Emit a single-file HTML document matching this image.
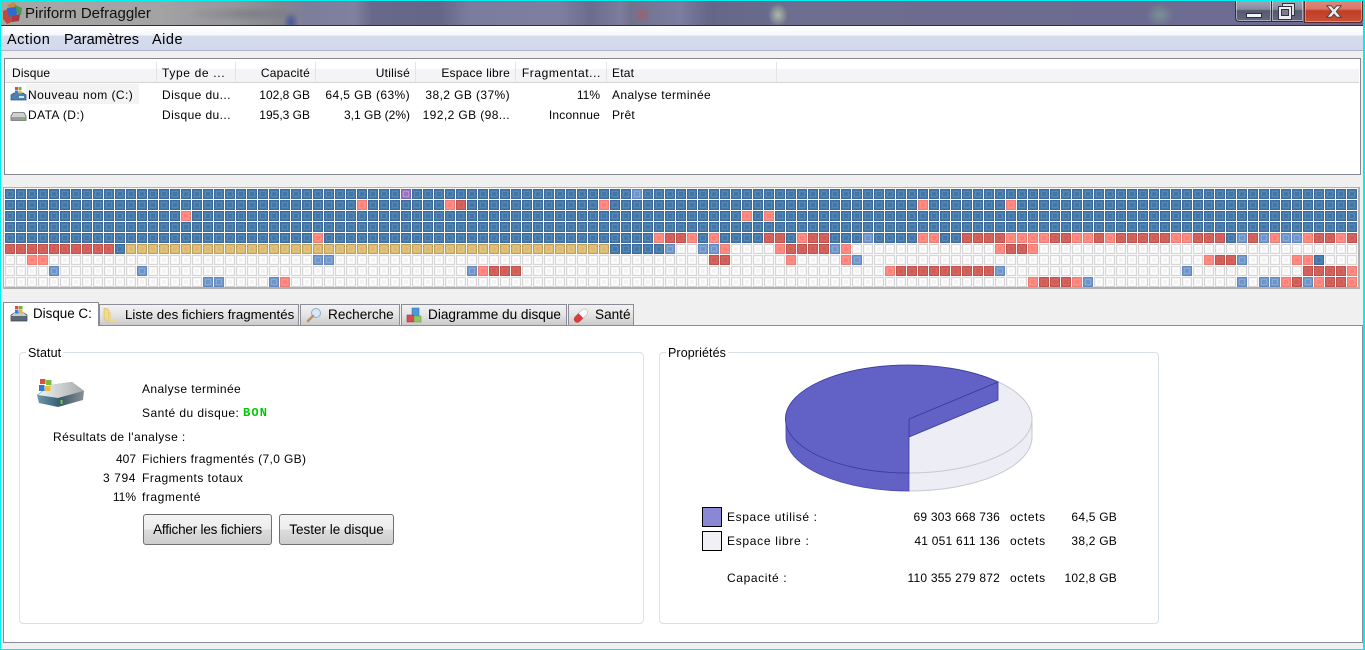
<!DOCTYPE html>
<html><head><meta charset="utf-8"><title>Piriform Defraggler</title>
<style>
html,body{margin:0;padding:0;width:1365px;height:650px;overflow:hidden;background:#f0f0f0}
body{position:relative;font-family:"Liberation Sans",sans-serif;font-size:12px;color:#000}
div,span,svg{position:absolute}
.t{white-space:nowrap;line-height:16px;height:16px;letter-spacing:.4px}
.n{letter-spacing:0}
.n2{letter-spacing:.22px}
.w{letter-spacing:.62px}
.r{text-align:right}
.tab{box-sizing:border-box;border:1px solid #8c8c96;border-bottom:0;top:304px;height:21px;background:linear-gradient(#f2f2f2,#e4e4e4 50%,#cacaca)}
.tx{font-size:13.4px;white-space:nowrap;line-height:16px;height:16px;top:307px}
.sep{width:1px;top:62px;height:20px;background:#e4e4e8}
.fs{box-sizing:border-box;border:1px solid #d8e0e8;border-radius:4px;top:352px;height:272px;background:#fff}
.lg{background:#fff;padding:0 2px;top:345px;white-space:nowrap;line-height:16px;height:16px;font-size:12.5px;letter-spacing:.1px}
.btn{box-sizing:border-box;border:1px solid #707070;border-radius:3px;top:514px;height:31px;background:linear-gradient(#f4f4f4,#ececec 50%,#dcdcdc 50%,#cecece);text-align:center;line-height:29px;font-size:13.5px;white-space:nowrap}
.menu{font-size:14.5px;top:32px;line-height:16px;height:16px;white-space:nowrap}
</style></head><body>

<!-- title bar -->
<div style="left:0;top:0;width:1365px;height:25px;background:
radial-gradient(ellipse 8px 10px at 291px 22px,rgba(50,70,150,.75),rgba(50,70,150,0)),
radial-gradient(ellipse 9px 9px at 642px 15px,rgba(170,90,90,.65),rgba(170,90,90,0)),
radial-gradient(ellipse 10px 12px at 778px 15px,rgba(190,205,170,.8),rgba(190,205,170,0)),
radial-gradient(ellipse 14px 12px at 1160px 15px,rgba(130,170,150,.6),rgba(130,170,150,0)),
radial-gradient(ellipse 60px 8px at 245px 14px,rgba(90,90,100,.3),rgba(90,90,100,0)),
linear-gradient(90deg,#a7a7a4 0,#a3a3a4 160px,#97979c 230px,#85858e 280px,#7d7d9c 310px,#80809f 355px,#68688a 372px,#666688 440px,#7c7c9e 470px,#7e7ea0 560px,#6c6c8e 590px,#7c7c9c 620px,#72728e 632px,#7c7ca0 680px,#666688 710px,#686a8c 760px,#6e6e90 792px,#6c6a90 1130px,#6e6c92 1178px,#6c6a90 1365px)"></div>
<div style="left:0;top:25px;width:1365px;height:1px;background:#2e2e3c"></div>

<!-- app icon -->
<svg style="left:2px;top:2px" width="21" height="22" viewBox="0 0 21 22">
<path d="M1 9 L8 6 L12 19 L5 22 L1 17Z" fill="#c0483c"/>
<path d="M5 3 L12 0 L16 5 L9 8Z" fill="#c88a3c"/>
<path d="M13 3 L20 6 L19 13 L13 11Z" fill="#4a9a58"/>
<path d="M5 6 L14 5 L15 14 L7 15Z" fill="#2f6ad0"/>
<path d="M10 14 L18 12 L17 19 L10 20Z" fill="#a83a40"/>
</svg>
<div class="t n" style="left:25px;top:6px;font-size:15px;color:#111">Piriform Defraggler</div>

<!-- window buttons -->
<div style="left:1235px;top:0;width:36px;height:22px;box-sizing:border-box;border:1px solid #30303c;border-top:0;border-right:0;border-radius:0 0 0 4px;background:linear-gradient(#a6a8b6,#868a9e 45%,#555a70 50%,#62667e);box-shadow:inset 0 0 0 1px rgba(255,255,255,.45)"></div>
<div style="left:1271px;top:0;width:32px;height:22px;box-sizing:border-box;border:1px solid #30303c;border-top:0;border-right:0;background:linear-gradient(#a6a8b6,#868a9e 45%,#555a70 50%,#62667e);box-shadow:inset 0 0 0 1px rgba(255,255,255,.45)"></div>
<div style="left:1304px;top:0;width:59px;height:23px;box-sizing:border-box;border:1px solid #5a2a2a;border-top:0;border-radius:0 0 4px 0;background:linear-gradient(#e2897a,#d87768 40%,#c23c22 50%,#c8503a);box-shadow:inset 0 0 0 1px rgba(255,255,255,.35)"></div>
<div style="left:1246px;top:13px;width:16px;height:5px;box-sizing:border-box;background:#f4f4f6;border:1px solid #30303c"></div>
<svg style="left:1277px;top:2px" width="20" height="18" viewBox="0 0 20 18">
<rect x="5.5" y="1.5" width="12" height="12" fill="#dfe0e6" stroke="#33333f"/>
<rect x="1.5" y="4.5" width="13" height="13" fill="#eeeef2" stroke="#33333f"/>
<rect x="4.5" y="7.5" width="7" height="6" fill="#7a7c90" stroke="#33333f"/>
</svg>
<svg style="left:1326px;top:5px" width="16" height="13" viewBox="0 0 18 15" preserveAspectRatio="none">
<path d="M1 1 L6 1 L9 4.5 L12 1 L17 1 L11.5 7.5 L17 14 L12 14 L9 10.5 L6 14 L1 14 L6.5 7.5Z" fill="#eceef2" stroke="#4a3a3a" stroke-width="1"/>
</svg>

<!-- menu bar -->
<div style="left:0;top:26px;width:1365px;height:25px;background:linear-gradient(#fff,#f6f8fc 9px,#d5dcee 10px,#d2d9eb 24px)"></div>
<div style="left:0;top:50px;width:1365px;height:1px;background:#b2b2c8"></div>
<div class="menu" style="left:7px;letter-spacing:.5px">Action</div>
<div class="menu" style="left:64px">Paramètres</div>
<div class="menu" style="left:152px;letter-spacing:.5px">Aide</div>

<!-- list -->
<div style="left:4px;top:58px;width:1357px;height:117px;box-sizing:border-box;border:1px solid #828790;background:#fff"></div>
<div style="left:5px;top:59px;width:1354px;height:23px;background:linear-gradient(#fff,#fff 10px,#f5f5f7 10px,#f3f3f5);border-bottom:1px solid #d5d5d5"></div>
<div class="sep" style="left:156px"></div><div class="sep" style="left:235px"></div><div class="sep" style="left:315px"></div><div class="sep" style="left:415px"></div><div class="sep" style="left:515px"></div><div class="sep" style="left:606px"></div><div class="sep" style="left:776px"></div>
<div style="left:26px;top:84px;width:113px;height:20px;background:#f3f3f3"></div>

<div class="t n" style="left:12px;top:65px;letter-spacing:.15px">Disque</div>
<div class="t" style="left:162px;top:65px;letter-spacing:.65px">Type de ...</div>
<div class="t n2 r" style="left:236px;width:74px;top:65px">Capacité</div>
<div class="t n2 r" style="left:316px;width:94px;top:65px">Utilisé</div>
<div class="t n2 r" style="left:416px;width:94px;top:65px">Espace libre</div>
<div class="t r" style="left:516px;width:85px;top:65px;letter-spacing:.6px">Fragmentat...</div>
<div class="t n2" style="left:612px;top:65px">Etat</div>

<svg style="left:10px;top:86px" width="17" height="16" viewBox="0 0 17 16">
<path d="M1 9 L4 7 L13 7 L16 9 L16 14 L1 14Z" fill="#4a82b4" stroke="#2e5a86" stroke-width=".8"/>
<rect x="9" y="10" width="5" height="2" fill="#d8e6f0"/>
<rect x="5" y="1" width="3" height="3" fill="#d8533a"/><rect x="8.500" y="1" width="3" height="3" fill="#6cb440"/><rect x="5" y="4.500" width="3" height="3" fill="#3a80d8"/><rect x="8.500" y="4.500" width="3" height="3" fill="#e8b830"/>
</svg>
<svg style="left:10px;top:110px" width="17" height="13" viewBox="0 0 17 13">
<path d="M1 6 L3 2.500 L14 2.500 L16 6 L16 10.500 L1 10.500Z" fill="#d0d2d2" stroke="#6a6c6c" stroke-width=".8"/>
<rect x="1.500" y="7" width="14" height="3" fill="#9a9c9c"/><rect x="12" y="8" width="2" height="1" fill="#7cd040"/>
</svg>

<div class="t" style="left:28px;top:87px;letter-spacing:.45px">Nouveau nom (C:)</div>
<div class="t" style="left:162px;top:87px">Disque du...</div>
<div class="t n r" style="left:236px;width:74px;top:87px">102,8 GB</div>
<div class="t r" style="left:316px;width:94px;top:87px">64,5 GB (63%)</div>
<div class="t r" style="left:416px;width:94px;top:87px">38,2 GB (37%)</div>
<div class="t n r" style="left:516px;width:84px;top:87px">11%</div>
<div class="t" style="left:612px;top:87px">Analyse terminée</div>

<div class="t" style="left:28px;top:107px">DATA (D:)</div>
<div class="t" style="left:162px;top:107px">Disque du...</div>
<div class="t n r" style="left:236px;width:74px;top:107px">195,3 GB</div>
<div class="t n r" style="left:316px;width:94px;top:107px">3,1 GB (2%)</div>
<div class="t r" style="left:416px;width:94px;top:107px">192,2 GB (98...</div>
<div class="t n2 r" style="left:516px;width:84px;top:107px">Inconnue</div>
<div class="t n2" style="left:612px;top:107px">Prêt</div>

<!-- block map -->
<div style="left:3px;top:187px;width:1357px;height:102px;box-sizing:border-box;border:1px solid #b0b0b0;border-width:1px 2px 2px 1px;background:#fafafa"></div>
<svg style="left:5px;top:189px" width="1353" height="99" viewBox="0 0 123 9" shape-rendering="crispEdges">
<defs>
<g id="b"><rect width=".9091" height=".9091" fill="#3f6b9a"/><rect x=".0909" y=".0909" width=".7273" height=".7273" fill="#467aa9"/><rect x=".1818" y=".1818" width=".5455" height=".5455" fill="#5488b6"/><rect x=".2727" y=".2727" width=".3636" height=".3636" fill="#4376a8"/></g>
<g id="l"><rect width=".9091" height=".9091" fill="#6488bc"/><rect x=".0909" y=".0909" width=".7273" height=".7273" fill="#7298cc"/><rect x=".1818" y=".1818" width=".5455" height=".5455" fill="#88a9d6"/><rect x=".2727" y=".2727" width=".3636" height=".3636" fill="#6e95ca"/></g>
<g id="r"><rect width=".9091" height=".9091" fill="#bc5450"/><rect x=".0909" y=".0909" width=".7273" height=".7273" fill="#d45e5a"/><rect x=".1818" y=".1818" width=".5455" height=".5455" fill="#d86660"/><rect x=".2727" y=".2727" width=".3636" height=".3636" fill="#d05c58"/></g>
<g id="p"><rect width=".9091" height=".9091" fill="#ec7e76"/><rect x=".0909" y=".0909" width=".7273" height=".7273" fill="#fd8880"/><rect x=".1818" y=".1818" width=".5455" height=".5455" fill="#ff9088"/><rect x=".2727" y=".2727" width=".3636" height=".3636" fill="#fd8078"/></g>
<g id="y"><rect width=".9091" height=".9091" fill="#bca060"/><rect x=".0909" y=".0909" width=".7273" height=".7273" fill="#dcba70"/><rect x=".1818" y=".1818" width=".5455" height=".5455" fill="#e4c480"/><rect x=".2727" y=".2727" width=".3636" height=".3636" fill="#dcb96e"/></g>
<g id="v"><rect width=".9091" height=".9091" fill="#8060a8"/><rect x=".0909" y=".0909" width=".7273" height=".7273" fill="#9c78c4"/><rect x=".1818" y=".1818" width=".5455" height=".5455" fill="#b094d2"/><rect x=".2727" y=".2727" width=".3636" height=".3636" fill="#9a74c2"/></g>
<g id="w"><rect width=".9091" height=".9091" fill="#d6d6d6"/><rect x=".0909" y=".0909" width=".7273" height=".7273" fill="#f6f6f6"/><rect x=".1818" y=".1818" width=".5455" height=".5455" fill="#fff"/><rect x=".2727" y=".2727" width=".3636" height=".3636" fill="#f5f2f3"/></g>
<pattern id="B" patternUnits="userSpaceOnUse" width="1" height="1"><use href="#b"/></pattern>
<pattern id="W" patternUnits="userSpaceOnUse" width="1" height="1"><use href="#w"/></pattern>
<pattern id="R" patternUnits="userSpaceOnUse" width="1" height="1"><use href="#r"/></pattern>
<pattern id="Y" patternUnits="userSpaceOnUse" width="1" height="1"><use href="#y"/></pattern>
</defs>
<rect width="123" height="5" fill="url(#B)"/>
<rect y="5" width="123" height="4" fill="url(#W)"/>
<rect y="5" width="10" height="1" fill="url(#R)"/>
<rect x="10" y="5" width="1" height="1" fill="url(#B)"/>
<rect x="11" y="5" width="44" height="1" fill="url(#Y)"/>
<rect x="55" y="5" width="5" height="1" fill="url(#B)"/>
<use href="#v" x="36" y="0"/><use href="#l" x="57" y="0"/>
<g transform="translate(0,1)"><use href="#p" x="32"/><use href="#p" x="40"/><use href="#r" x="41"/><use href="#p" x="54"/><use href="#p" x="83"/><use href="#p" x="91"/></g>
<g transform="translate(0,2)"><use href="#p" x="16"/><use href="#p" x="67"/><use href="#p" x="69"/></g>
<g transform="translate(0,4)"><use href="#p" x="28"/><use href="#p" x="59"/><use href="#r" x="60"/><use href="#r" x="61"/><use href="#p" x="62"/><use href="#p" x="64"/><use href="#r" x="69"/><use href="#r" x="70"/><use href="#p" x="72"/><use href="#r" x="73"/><use href="#r" x="74"/><use href="#l" x="78"/><use href="#p" x="83"/><use href="#p" x="84"/><use href="#r" x="87"/><use href="#r" x="88"/><use href="#r" x="89"/><use href="#r" x="90"/><use href="#p" x="91"/><use href="#p" x="92"/><use href="#p" x="93"/><use href="#p" x="94"/><use href="#r" x="95"/><use href="#r" x="96"/><use href="#p" x="97"/><use href="#p" x="98"/><use href="#r" x="99"/><use href="#p" x="100"/><use href="#r" x="101"/><use href="#r" x="102"/><use href="#r" x="103"/><use href="#r" x="104"/><use href="#r" x="105"/><use href="#p" x="106"/><use href="#p" x="107"/><use href="#r" x="108"/><use href="#r" x="109"/><use href="#r" x="110"/><use href="#l" x="112"/><use href="#r" x="113"/><use href="#l" x="114"/><use href="#p" x="115"/><use href="#l" x="116"/><use href="#l" x="117"/><use href="#p" x="118"/><use href="#r" x="119"/><use href="#r" x="120"/><use href="#p" x="121"/><use href="#r" x="122"/></g>
<g transform="translate(0,5)"><use href="#l" x="60"/><use href="#l" x="63"/><use href="#l" x="64"/><use href="#p" x="65"/><use href="#p" x="70"/><use href="#r" x="71"/><use href="#r" x="72"/><use href="#r" x="73"/><use href="#r" x="74"/><use href="#l" x="75"/><use href="#p" x="76"/><use href="#p" x="90"/><use href="#r" x="91"/><use href="#r" x="92"/><use href="#p" x="93"/></g>
<g transform="translate(0,6)"><use href="#p" x="2"/><use href="#p" x="3"/><use href="#l" x="28"/><use href="#l" x="29"/><use href="#r" x="64"/><use href="#r" x="65"/><use href="#p" x="71"/><use href="#p" x="76"/><use href="#l" x="77"/><use href="#p" x="109"/><use href="#r" x="110"/><use href="#r" x="111"/><use href="#l" x="112"/><use href="#p" x="117"/><use href="#p" x="118"/><use href="#b" x="119"/></g>
<g transform="translate(0,7)"><use href="#l" x="4"/><use href="#l" x="12"/><use href="#l" x="42"/><use href="#p" x="43"/><use href="#r" x="44"/><use href="#r" x="45"/><use href="#r" x="46"/><use href="#p" x="80"/><use href="#r" x="81"/><use href="#r" x="82"/><use href="#r" x="83"/><use href="#r" x="84"/><use href="#r" x="85"/><use href="#r" x="86"/><use href="#r" x="87"/><use href="#r" x="88"/><use href="#r" x="89"/><use href="#l" x="90"/><use href="#l" x="107"/><use href="#r" x="118"/><use href="#r" x="119"/><use href="#r" x="120"/><use href="#r" x="121"/><use href="#p" x="122"/></g>
<g transform="translate(0,8)"><use href="#l" x="18"/><use href="#l" x="19"/><use href="#l" x="24"/><use href="#p" x="25"/><use href="#p" x="93"/><use href="#r" x="94"/><use href="#r" x="95"/><use href="#r" x="96"/><use href="#p" x="97"/><use href="#l" x="98"/><use href="#l" x="112"/><use href="#l" x="114"/><use href="#l" x="115"/><use href="#p" x="116"/><use href="#r" x="117"/><use href="#l" x="118"/><use href="#p" x="119"/><use href="#r" x="120"/><use href="#r" x="121"/><use href="#p" x="122"/></g>
</svg>

<!-- tab panel -->
<div style="left:3px;top:325px;width:1360px;height:318px;box-sizing:border-box;border:1px solid #8c8c96;background:#fff"></div>
<div class="tab" style="left:99px;width:200px"></div>
<div class="tab" style="left:300px;width:100px"></div>
<div class="tab" style="left:401px;width:166px"></div>
<div class="tab" style="left:568px;width:66px"></div>
<div class="tab" style="left:3px;width:96px;top:302px;height:24px;background:#fff"></div>

<svg style="left:10px;top:305px" width="18" height="17" viewBox="0 0 18 17">
<path d="M1 10 L4 8 L14 8 L17 10 L17 16 L1 16Z" fill="#5a6a78" stroke="#3c4650" stroke-width=".7"/>
<path d="M4 8 L14 8 L17 11 L1 11Z" fill="#c8ccd0"/>
<rect x="5" y="1" width="3.500" height="3.500" fill="#d8533a"/><rect x="9" y="1" width="3.500" height="3.500" fill="#6cb440"/><rect x="5" y="5" width="3.500" height="3.500" fill="#3a80d8"/><rect x="9" y="5" width="3.500" height="3.500" fill="#e8b830"/>
</svg>
<svg style="left:103px;top:307px" width="15" height="16" viewBox="0 0 15 16">
<path d="M1 1 L5 2 L6 4 L6 15 L3 14 L1 11Z" fill="#f2dc8c" stroke="#d2b860" stroke-width=".6"/>
<path d="M6 4 L8 5 L8 13 L14 13 L14 15 L6 15Z" fill="#e8d8a0"/>
</svg>
<svg style="left:306px;top:307px" width="16" height="16" viewBox="0 0 16 16">
<circle cx="10" cy="6" r="4.500" fill="#d8e8f6" stroke="#8caccc"/>
<path d="M7 9 L2 14" stroke="#c09060" stroke-width="2.500" stroke-linecap="round"/>
</svg>
<svg style="left:406px;top:307px" width="16" height="16" viewBox="0 0 16 16">
<rect x="6" y="1" width="7" height="8" fill="#4a98d8" stroke="#3a78b0" stroke-width=".6"/>
<rect x="1" y="8" width="6.500" height="7" fill="#d84a58" stroke="#a83844" stroke-width=".6"/>
<rect x="8" y="9" width="7" height="6" fill="#8cc860" stroke="#68a040" stroke-width=".6"/>
</svg>
<svg style="left:573px;top:307px" width="16" height="16" viewBox="0 0 16 16">
<path d="M1.800 10 L9 2.800 A3.400 3.400 0 0 1 13.800 7.600 L6.600 14.800 A3.400 3.400 0 0 1 1.800 10Z" fill="#fff" stroke="#b0b0b8" stroke-width=".6"/>
<path d="M1.800 10 L5.500 6.300 L10.300 11.100 L6.600 14.800 A3.400 3.400 0 0 1 1.800 10Z" fill="#dc3a3a"/>
</svg>

<div class="tx" style="left:33px;top:306px">Disque C:</div>
<div class="tx" style="left:125px;font-size:13.3px">Liste des fichiers fragmentés</div>
<div class="tx" style="left:328px;font-size:13.6px">Recherche</div>
<div class="tx" style="left:428px;font-size:13.6px">Diagramme du disque</div>
<div class="tx" style="left:595px;font-size:13.6px">Santé</div>

<!-- Statut -->
<div class="fs" style="left:19px;width:625px"></div>
<div class="lg" style="left:26px">Statut</div>

<svg style="left:36px;top:378px" width="50" height="30" viewBox="0 0 50 30">
<defs><linearGradient id="dt" x1="0" x2="1" y1="0" y2="0"><stop offset="0" stop-color="#f0f2f2"/><stop offset="1" stop-color="#a8acae"/></linearGradient>
<linearGradient id="ds" x1="0" x2="1" y1="0" y2="0"><stop offset="0" stop-color="#6a9ab0"/><stop offset=".5" stop-color="#3a5a6c"/><stop offset="1" stop-color="#8a9094"/></linearGradient></defs>
<path d="M1 17 L14 7 L36 4 L48 13 L47 22 L22 29 L3 25Z" fill="url(#ds)"/>
<path d="M2 17 L14 7 L36 4 L47 13 L22 20Z" fill="url(#dt)"/>
<rect x="24.500" y="22" width="2" height="4" fill="#70d040"/>
<rect x="4" y="1" width="5.500" height="5" fill="#d8533a"/><rect x="10" y="2" width="5.500" height="5" fill="#78bc40"/><rect x="3" y="7" width="5.500" height="6" fill="#2f7ad8"/><rect x="9" y="8" width="5.500" height="5" fill="#f0c030"/>
</svg>

<div class="t" style="left:142px;top:381px">Analyse terminée</div>
<div class="t" style="left:142px;top:405px;letter-spacing:.45px">Santé du disque:</div>
<div class="t n" style="left:243px;top:405px;color:#00c800;font-weight:bold;font-family:'Liberation Mono',monospace;font-size:12px;letter-spacing:1.2px">BON</div>
<div class="t" style="left:53px;top:429px">Résultats de l'analyse :</div>
<div class="t n r" style="left:60px;width:76px;top:451px">407</div>
<div class="t" style="left:142px;top:451px;letter-spacing:.37px">Fichiers fragmentés (7,0 GB)</div>
<div class="t n2 r" style="left:60px;width:76px;top:470px;letter-spacing:.6px">3 794</div>
<div class="t" style="left:142px;top:470px;letter-spacing:.5px">Fragments totaux</div>
<div class="t n r" style="left:60px;width:76px;top:489px">11%</div>
<div class="t" style="left:142px;top:489px;letter-spacing:.55px">fragmenté</div>
<div class="btn" style="left:143px;width:129px;letter-spacing:-.2px">Afficher les fichiers</div>
<div class="btn" style="left:279px;width:115px">Tester le disque</div>

<!-- Propriétés -->
<div class="fs" style="left:659px;width:500px"></div>
<div class="lg" style="left:666px">Propriétés</div>

<svg style="left:770px;top:355px" width="280" height="145" viewBox="770 355 280 145">
<ellipse cx="909" cy="437" rx="123" ry="54" fill="#ecedf5" stroke="#c8c8ce"/>
<rect x="786" y="419" width="246" height="18" fill="#ecedf5"/>
<path d="M786 419 L786 437 M1032 419 L1032 437" stroke="#c8c8ce"/>
<ellipse cx="909" cy="419" rx="123" ry="54" fill="#ecedf5" stroke="#c8c8ce"/>
<path d="M786 419 A123 54 0 0 0 909 473 L909 491 A123 54 0 0 1 786 437Z" fill="#6262c6" stroke="#4a4aac" stroke-width=".8"/>
<path d="M909 419 L998 382 L998 400 L909 437Z" fill="#6262c6" stroke="#3a3a9c" stroke-width=".8"/>
<path d="M909 419 L998 382 A123 54 0 1 0 909 473Z" fill="#6262c6" stroke="#3a3a9c" stroke-width=".8"/>
</svg>

<div style="left:702px;top:507px;width:20px;height:20px;box-sizing:border-box;border:1px solid #000;background:#8a88d4"></div>
<div style="left:702px;top:531px;width:20px;height:20px;box-sizing:border-box;border:1px solid #000;background:#f0f0f5"></div>
<div class="t w" style="left:727px;top:509px">Espace utilisé :</div>
<div class="t" style="left:727px;top:533px;letter-spacing:.7px">Espace libre :</div>
<div class="t w" style="left:727px;top:570px">Capacité :</div>
<div class="t n2 r" style="left:880px;width:120px;top:509px">69 303 668 736</div>
<div class="t n2 r" style="left:880px;width:120px;top:533px">41 051 611 136</div>
<div class="t n2 r" style="left:880px;width:120px;top:570px">110 355 279 872</div>
<div class="t w" style="left:1010px;top:509px">octets</div>
<div class="t w" style="left:1010px;top:533px">octets</div>
<div class="t w" style="left:1010px;top:570px">octets</div>
<div class="t n2 r" style="left:1050px;width:67px;top:509px">64,5 GB</div>
<div class="t n2 r" style="left:1050px;width:67px;top:533px">38,2 GB</div>
<div class="t n2 r" style="left:1050px;width:67px;top:570px">102,8 GB</div>

<!-- cyan frame -->
<div style="left:0;top:0;width:1365px;height:1px;background:#00f0f0"></div>
<div style="left:0;top:649px;width:1365px;height:1px;background:#00f0f0"></div>
<div style="left:0;top:0;width:1px;height:650px;background:#00f0f0"></div>
<div style="left:1363px;top:0;width:2px;height:650px;background:#00f0f0"></div>
</body></html>
